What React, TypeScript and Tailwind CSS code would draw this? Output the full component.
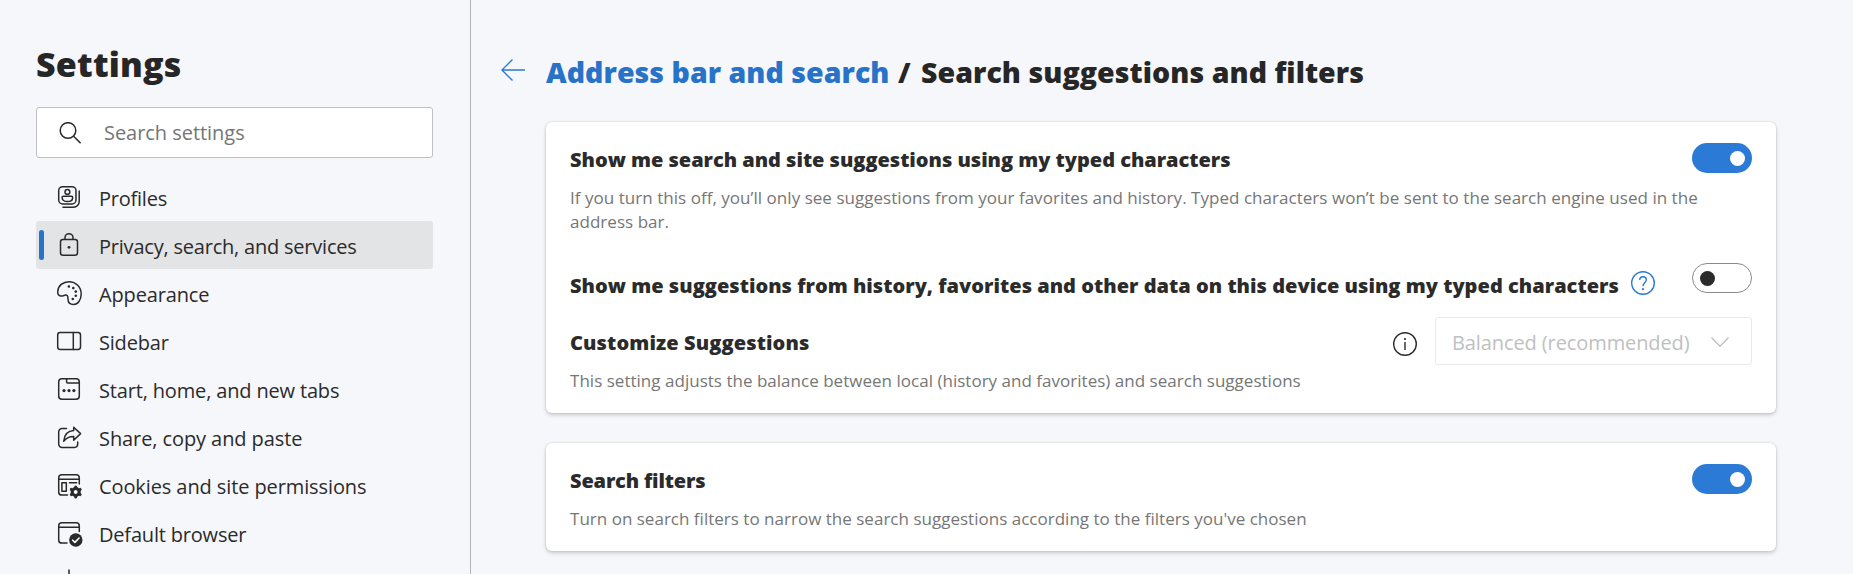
import type { ReactNode } from 'react'

function Icon({ children }: { children: ReactNode }) {
  return (
    <svg
      viewBox="0 0 24 24"
      className="size-6 shrink-0 overflow-visible"
      fill="none"
      stroke="#2a2a2a"
      strokeWidth="1.5"
      strokeLinecap="round"
      strokeLinejoin="round"
    >
      {children}
    </svg>
  )
}

const icons = {
  profiles: (
    <Icon>
      <rect x="1.7" y="1.7" width="17.3" height="17.3" rx="4" />
      <path d="M22.2 6v10.5a5.7 5.7 0 0 1-5.7 5.7H6" />
      <circle cx="10.4" cy="6.9" r="2.4" />
      <path d="M6.4 11.2h8c.8 0 1.3.5 1.3 1.2 0 2.6-2.3 4.1-5.3 4.1s-5.3-1.5-5.3-4.1c0-.7.5-1.2 1.3-1.2z" />
    </Icon>
  ),
  lock: (
    <Icon>
      <rect x="3.5" y="6.4" width="17" height="15.8" rx="2.4" />
      <path d="M8 6.2V4.7a4 4 0 0 1 8 0v1.5" />
      <circle cx="12" cy="14.3" r="1.4" fill="#2a2a2a" stroke="none" />
    </Icon>
  ),
  palette: (
    <Icon>
      <path d="M.7 10.6C1 4.6 6 .7 12 .7c7 0 12.2 5.6 12.2 12.3 0 6-3.3 10.4-7.6 10.4-3.6 0-5.6-2.2-5.6-5.5 0-2.2-.5-3.9-2.2-3.9-1.5 0-2.4 1-4.6 1C1.8 15 .6 13.2.7 10.6z" />
      <g fill="#2a2a2a" stroke="none">
        <circle cx="11.9" cy="5.5" r="1.3" />
        <circle cx="16.3" cy="7.1" r="1.3" />
        <circle cx="18.8" cy="10.6" r="1.3" />
        <circle cx="18.8" cy="14.8" r="1.3" />
        <circle cx="15.8" cy="18" r="1.3" />
      </g>
    </Icon>
  ),
  sidebar: (
    <Icon>
      <rect x=".7" y="3.6" width="22.8" height="16.9" rx="2.4" />
      <path d="M16.3 3.6v16.9" />
    </Icon>
  ),
  tab: (
    <Icon>
      <rect x="1.7" y="1.7" width="20.6" height="20.6" rx="3.2" />
      <path d="M9.6 1.9v3.2c0 .6.4 1 1 1H22" />
      <g fill="#2a2a2a" stroke="none">
        <circle cx="7" cy="13.6" r="1.6" />
        <circle cx="12" cy="13.6" r="1.6" />
        <circle cx="16.9" cy="13.6" r="1.6" />
      </g>
    </Icon>
  ),
  share: (
    <Icon>
      <path d="M9.5 3.6H5a3.3 3.3 0 0 0-3.3 3.3v12.2A3.3 3.3 0 0 0 5 22.4h12.4a3.3 3.3 0 0 0 3.3-3.3V17" />
      <path d="M16.7 2.2l6.9 6.4-6.9 6.6v-3.6c-4.3-.1-7.2 1.3-10 4.6.6-6 4-10.2 10-10.6z" />
    </Icon>
  ),
  cookies: (
    <Icon>
      <path d="M10.5 22.1H4.9a3.2 3.2 0 0 1-3.2-3.2v-14a3.2 3.2 0 0 1 3.2-3.2h14.2a3.2 3.2 0 0 1 3.2 3.2v6M1.7 6.2h20.6M12.5 9.8h7.2" />
      <rect x="4.9" y="9.8" width="4.4" height="8.4" />
      <circle cx="18.7" cy="19" r="3.5" strokeWidth="3.1" />
      <path
        d="M18.7 14.5v-.6M18.7 24.1v-.6M14.8 16.75l-.5-.3M23.1 21.55l-.5-.3M14.8 21.25l-.5.3M23.1 16.45l-.5.3"
        strokeWidth="3"
      />
    </Icon>
  ),
  browser: (
    <Icon>
      <path d="M10 22.1H4.9a3.2 3.2 0 0 1-3.2-3.2v-14a3.2 3.2 0 0 1 3.2-3.2h14.2a3.2 3.2 0 0 1 3.2 3.2v5.5M1.7 6.3h20.6" />
      <circle cx="18.8" cy="19" r="6.7" fill="#2a2a2a" stroke="none" />
      <path d="M15.7 19.2l2.2 2.2 4.2-4.4" stroke="#fff" strokeWidth="1.6" />
    </Icon>
  ),
  languages: (
    <Icon>
      <path d="M12 1v22M4 12h16" />
    </Icon>
  ),
}

const items = [
  { label: 'Profiles', icon: icons.profiles, tracking: 'tracking-[-0.23px]' },
  { label: 'Privacy, search, and services', icon: icons.lock, tracking: 'tracking-[-0.21px]', selected: true },
  { label: 'Appearance', icon: icons.palette, tracking: 'tracking-[-0.15px]' },
  { label: 'Sidebar', icon: icons.sidebar, tracking: 'tracking-[-0.2px]' },
  { label: 'Start, home, and new tabs', icon: icons.tab, tracking: 'tracking-[-0.16px]' },
  { label: 'Share, copy and paste', icon: icons.share, tracking: 'tracking-[-0.09px]' },
  { label: 'Cookies and site permissions', icon: icons.cookies, tracking: 'tracking-[-0.1px]' },
  { label: 'Default browser', icon: icons.browser, tracking: 'tracking-[-0.19px]' },
  { label: '', icon: icons.languages, tracking: '' },
]

function Toggle({ on }: { on?: boolean }) {
  return on ? (
    <button className="flex h-[30px] w-[60px] shrink-0 items-center justify-end rounded-full bg-[#2b7ad6] pt-px pr-[7px]">
      <span className="size-[15px] rounded-full bg-white" />
    </button>
  ) : (
    <button className="flex h-[30px] w-[60px] shrink-0 items-center rounded-full border border-[#8a8a8a] pt-px pl-[7px]">
      <span className="size-[15px] rounded-full bg-[#2b2b2b]" />
    </button>
  )
}

function Heading({ children, tracking = '' }: { children: ReactNode; tracking?: string }) {
  return (
    <h2 className={`pt-px text-xl leading-7 font-extrabold whitespace-nowrap text-[#2b2b2b] ${tracking}`}>
      {children}
    </h2>
  )
}

const card = 'w-[1230px] rounded-md bg-white px-6 shadow-[0_0_2px_rgba(0,0,0,0.16),0_2px_4px_rgba(0,0,0,0.18)]'
const description = 'mt-3 text-[17px] leading-6 text-[#767676]'

export default function App() {
  return (
    <div className="flex h-[574px] overflow-hidden bg-[#f6f7fb] font-['Open_Sans',sans-serif] text-[#2b2b2b]">
      <aside className="w-[471px] shrink-0 border-r border-[#b3b3b8] pt-[44px] pr-[37px] pl-9">
        <h1 className="text-[34px] leading-10 font-extrabold tracking-[0.2px] text-[#262626]">Settings</h1>
        <div className="mt-[23px] flex h-[51px] items-center gap-[23px] rounded-[3px] border border-[#bfbfc4] bg-white pl-[22px]">
          <svg viewBox="0 0 22 22" className="size-[22px]" fill="none" stroke="#2a2a2a" strokeWidth="1.5">
            <circle cx="9" cy="8.5" r="7.8" />
            <path d="M14.6 14.2l7 7" />
          </svg>
          <span className="text-xl leading-7 tracking-[-0.04px] text-[#757575]">Search settings</span>
        </div>
        <nav className="mt-[15px]">
          {items.map((item) => (
            <div
              key={item.label}
              className={`relative flex h-12 items-center gap-[18px] rounded-[3px] pl-[21px] ${item.selected ? 'bg-[#e3e4e6]' : ''}`}
            >
              {item.selected && (
                <span className="absolute top-[9px] left-[3px] h-[30px] w-[5px] rounded-sm bg-[#2872c8]" />
              )}
              {item.icon}
              <span className={`pt-1 text-xl leading-7 whitespace-nowrap ${item.tracking}`}>{item.label}</span>
            </div>
          ))}
        </nav>
      </aside>

      <main className="flex flex-1 flex-col pt-[52px] pl-[30px]">
        <div className="flex h-10 items-center gap-[21px]">
          <svg viewBox="0 0 24 22" className="mb-1 h-[22px] w-6" fill="none" stroke="#2b7ad6" strokeWidth="1.4">
            <path d="M24 11H1M11.5.6L.9 11l10.6 10.4" />
          </svg>
          <div className="flex text-[28.5px] leading-10 font-extrabold whitespace-nowrap text-[#262626]">
            <a className="w-[352px] tracking-[0.04px] text-[#2872c8]">Address bar and search</a>
            <span className="w-[23px]">/</span>
            <span className="tracking-[0.06px]">Search suggestions and filters</span>
          </div>
        </div>

        <div className="mt-[30px] flex flex-col gap-[30px] pl-[45px]">
          <section className={`${card} h-[291px]`}>
            <div className="flex h-[141px] items-start justify-between pt-[21px]">
              <div className="w-[1122px] pt-0.5">
                <Heading tracking="tracking-[-0.02px]">
                  Show me search and site suggestions using my typed characters
                </Heading>
                <p className={`w-[1132px] tracking-[0.035px] ${description}`}>
                  If you turn this off, you’ll only see suggestions from your favorites and history. Typed characters
                  won’t be sent to the search engine used in the address bar.
                </p>
              </div>
              <Toggle on />
            </div>
            <div className="flex h-[54px] items-start justify-between">
              <div className="flex items-start gap-3 pt-2">
                <Heading tracking="tracking-[0.025px]">
                  Show me suggestions from history, favorites and other data on this device using my typed characters
                </Heading>
                <svg viewBox="0 0 24 24" className="size-6" fill="none" stroke="#2b7ad6" strokeWidth="1.4">
                  <circle cx="12" cy="12" r="11.3" />
                  <path d="M8.7 9c0-2 1.4-3.2 3.3-3.2s3.3 1.2 3.3 3c0 2.9-3.3 3-3.3 6.400" />
                  <circle cx="12" cy="18.2" r="1.1" fill="#2b7ad6" stroke="none" />
                </svg>
              </div>
              <Toggle />
            </div>
            <div className="flex items-start">
              <div className="flex-1 pt-[11px]">
                <Heading tracking="tracking-[0.12px]">Customize Suggestions</Heading>
                <p className={`tracking-[0.02px] ${description}`}>
                  This setting adjusts the balance between local (history and favorites) and search suggestions
                </p>
              </div>
              <svg viewBox="0 0 24 24" className="mt-[15px] mr-[18px] size-6" fill="none" stroke="#2a2a2a" strokeWidth="1.4">
                <circle cx="12" cy="12" r="11.3" />
                <path d="M12 10v8" />
                <circle cx="12" cy="7" r="1.1" fill="#2a2a2a" stroke="none" />
              </svg>
              <div className="flex h-12 w-[317px] items-center justify-between rounded-[3px] border border-[#e9eaeb] pr-[22px] pl-4 text-xl leading-7 tracking-[-0.1px] text-[#bfc0c2]">
                <span className="pt-1">Balanced (recommended)</span>
                <svg viewBox="0 0 18 10" className="mt-0.5 h-2.5 w-[18px]" fill="none" stroke="#bfc0c2" strokeWidth="1.4">
                  <path d="M.5.5L9 9.2 17.5.5" />
                </svg>
              </div>
            </div>
          </section>

          <section className={`${card} flex h-[108px] items-start justify-between pt-[21px]`}>
            <div className="pt-0.5">
              <Heading tracking="tracking-[-0.16px]">Search filters</Heading>
              <p className={`tracking-[0.013px] ${description}`}>
                Turn on search filters to narrow the search suggestions according to the filters you've chosen
              </p>
            </div>
            <Toggle on />
          </section>
        </div>
      </main>
    </div>
  )
}
